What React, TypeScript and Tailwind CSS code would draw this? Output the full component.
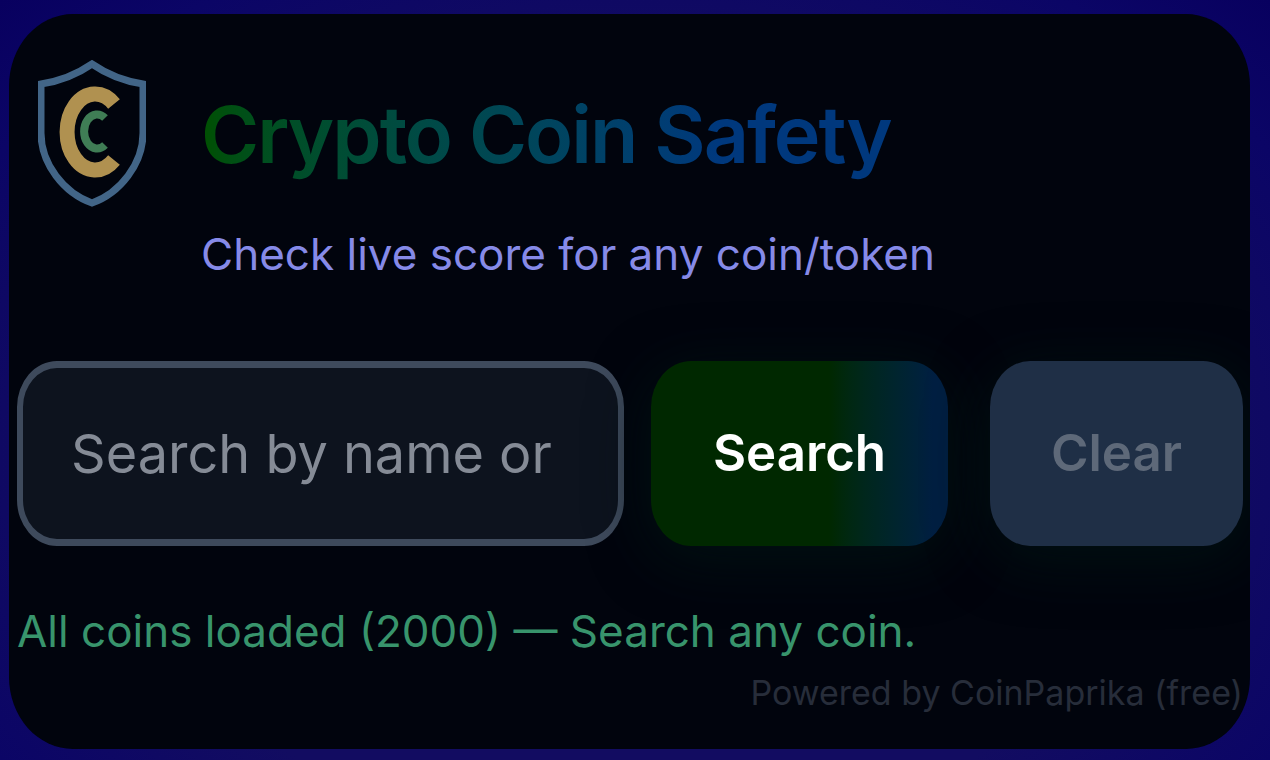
import React, { useState } from 'react';

const ShieldLogo: React.FC = () => (
    <svg viewBox="0 0 108 148" className="w-[108px] h-[148px] shrink-0" fill="none" aria-hidden="true">
        <path
            d="M54 4 C41 13 23 21 3 24 V73 C3 104 26 133 54 143 C82 133 105 104 105 73 V24 C85 21 67 13 54 4 Z"
            stroke="#426587"
            strokeWidth="7"
        />
        <path d="M76 44 A28 38 0 1 0 76 100" stroke="#b09150" strokeWidth="15" />
        <path d="M67 58 A13 17 0 1 0 67 85" stroke="#3f7d55" strokeWidth="8" />
    </svg>
);

const Header: React.FC = () => (
    <header className="flex items-start pl-[21px]">
        <ShieldLogo />
        <div className="pl-[55px] pt-3.5">
            <h1 className="w-fit text-[79px] leading-[120px] font-semibold tracking-tight whitespace-nowrap bg-linear-to-r from-[#005000] to-[#00387d] to-75% bg-clip-text text-transparent">
                Crypto Coin Safety
            </h1>
            <p className="pt-7 text-[44px] leading-[64px] whitespace-nowrap text-[#868ae8]">
                Check live score for any coin/token
            </p>
        </div>
    </header>
);

const App: React.FC = () => {
    const [query, setQuery] = useState('');

    return (
        <div className="min-h-screen pt-[14px] pb-[11px] pl-[9px] pr-5 flex bg-[radial-gradient(ellipse_at_50%_60%,#120c61_60%,#0b0566_85%,#08005f_100%)] font-[Inter,sans-serif]">
            <main className="w-full flex flex-col pl-2 pr-[7px] pt-[46px] overflow-hidden rounded-[64px/72px] bg-[#01040d]">
                <Header />

                <form className="mt-[75px] h-[185px] flex" onSubmit={(e) => e.preventDefault()}>
                    <input
                        type="text"
                        aria-label="Search by name or symbol"
                        value={query}
                        onChange={(e) => setQuery(e.target.value)}
                        placeholder="Search by name or"
                        className="flex-1 min-w-0 px-12 rounded-[40px/46px] border-x-[6px] border-y-[7px] border-[#3e4a5c] bg-[#0d131e] text-[54px] text-white placeholder-[#858b96] outline-none"
                    />
                    <button
                        type="submit"
                        className="ml-[27px] w-[297px] rounded-[40px/46px] bg-linear-to-r from-[#002800] from-60% to-[#001f42] to-95% text-[51px] font-semibold text-white shadow-[0_12px_60px_#001112]"
                    >
                        Search
                    </button>
                    <button
                        type="button"
                        disabled={!query}
                        onClick={() => setQuery('')}
                        className="ml-[42px] w-[253px] rounded-[40px/46px] bg-[#1f2f46] text-[51px] font-semibold text-[#5e6979] shadow-[0_12px_60px_#001112]"
                    >
                        Clear
                    </button>
                </form>

                <p className="mt-[53px] text-[44px] leading-[64px] whitespace-nowrap text-[#38946c]">
                    All coins loaded (2000) — Search any coin.
                </p>
                <footer className="text-right text-[34px] leading-[60px] whitespace-nowrap text-[#272d3a]">
                    Powered by CoinPaprika (free)
                </footer>
            </main>
        </div>
    );
};

export default App;
